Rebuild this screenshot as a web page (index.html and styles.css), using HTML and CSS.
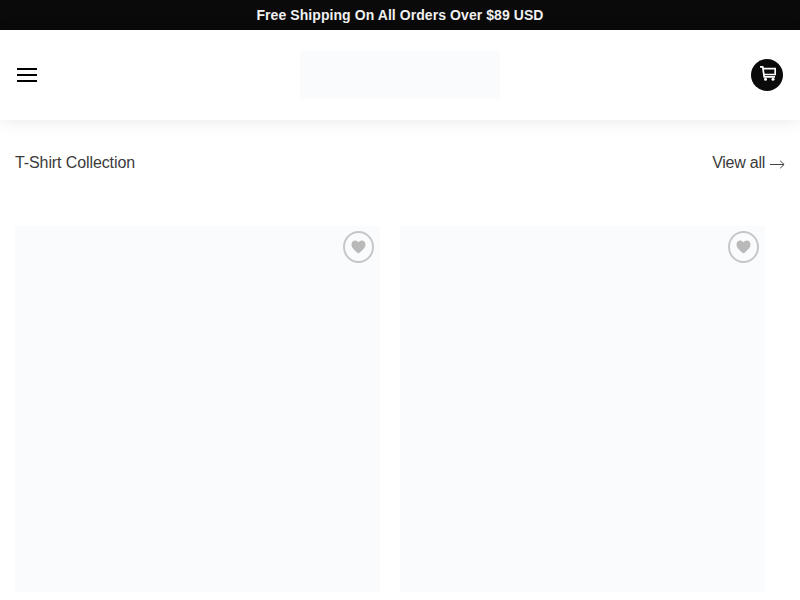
FILE: index.html
```html
<!DOCTYPE html>
<html lang="en">
<head>
    <meta charset="UTF-8">
    <meta name="viewport" content="width=device-width, initial-scale=1.0">
    <title>T-Shirt Collection</title>
    <link rel="stylesheet" href="styles.css">
</head>
<body>
    <div class="promo-bar">Free Shipping On All Orders Over $89 USD</div>

    <header class="site-header">
        <button class="menu-button" aria-label="Menu">
            <span></span>
            <span></span>
            <span></span>
        </button>
        <div class="logo"></div>
        <a class="cart-button" href="#" aria-label="Cart">
            <svg width="16" height="15" viewBox="0 0 16 15">
                <path d="M0 .9h2.700l1.500 9.900h10.800" fill="none" stroke="#fff" stroke-width="1.700"/>
                <path d="M3 2.700h12.200v5.800H3.900" fill="none" stroke="#fff" stroke-width="1.700"/>
                <circle cx="5.500" cy="13.300" r="1.500" fill="#fff"/>
                <circle cx="13" cy="13.300" r="1.500" fill="#fff"/>
            </svg>
        </a>
    </header>

    <main class="collection">
        <div class="collection-head">
            <h2>T-Shirt Collection</h2>
            <a class="view-all" href="#">View all
                <svg width="15" height="9" viewBox="0 0 15 9">
                    <path d="M0 4.500h14M10.200 .8l3.900 3.700-3.900 3.700" fill="none" stroke="#444" stroke-width="1"/>
                </svg>
            </a>
        </div>

        <div class="product-row">
            <div class="product-card">
                <button class="wishlist" aria-label="Add to wishlist">
                    <svg width="15" height="14" viewBox="0 0 16 15">
                        <path d="M8 14.500C3 10.500 .5 8 .5 4.800 .5 2.300 2.400 .6 4.500 .6c1.500 0 2.800.8 3.500 2.100C8.700 1.400 10 .6 11.500 .6c2.100 0 4 1.700 4 4.200 0 3.200-2.500 5.700-7.500 9.700z" fill="#b9b9b9"/>
                    </svg>
                </button>
            </div>
            <div class="product-card">
                <button class="wishlist" aria-label="Add to wishlist">
                    <svg width="15" height="14" viewBox="0 0 16 15">
                        <path d="M8 14.500C3 10.500 .5 8 .5 4.800 .5 2.300 2.400 .6 4.500 .6c1.500 0 2.800.8 3.500 2.100C8.700 1.400 10 .6 11.500 .6c2.100 0 4 1.700 4 4.200 0 3.200-2.500 5.700-7.500 9.700z" fill="#b9b9b9"/>
                    </svg>
                </button>
            </div>
        </div>
    </main>
</body>
</html>
```
FILE: styles.css
```css
html, body {
    height: 600px;
    overflow: hidden;
}

body {
    background-color: white;
    color: #3a3a3a;
    font-family: 'Liberation Sans', Arial, sans-serif;
    margin: 0;
    padding: 0;
}

.promo-bar {
    background-color: #0a0a0a;
    color: #f0f0f0;
    font-size: 14px;
    font-weight: bold;
    letter-spacing: 0.07px;
    height: 30px;
    line-height: 31px;
    text-align: center;
}

.site-header {
    height: 90px;
    background-color: white;
    box-shadow: 0 2px 16px rgba(0, 0, 0, 0.08);
    display: grid;
    grid-template-columns: 1fr auto 1fr;
    align-items: center;
    padding: 0 17px;
    position: relative;
}

.menu-button {
    width: 20px;
    height: 14px;
    padding: 0;
    border: none;
    background: none;
    display: flex;
    flex-direction: column;
    justify-content: space-between;
}

.menu-button span {
    display: block;
    width: 20px;
    height: 2px;
    background-color: #000;
}

.logo {
    width: 200px;
    height: 48px;
    background-color: #fafbfd;
}

.cart-button {
    width: 32px;
    height: 32px;
    border-radius: 50%;
    background-color: #0a0a0a;
    display: flex;
    align-items: center;
    justify-content: center;
    justify-self: end;
}

.cart-button svg {
    margin: -3px 0 0 2px;
}

.collection {
    padding: 0 15px;
}

.collection-head {
    display: flex;
    justify-content: space-between;
    align-items: center;
    height: 20px;
    padding-top: 33px;
    margin-bottom: 53px;
}

.collection-head h2 {
    font-size: 16px;
    font-weight: normal;
    letter-spacing: -0.1px;
    margin: 0;
}

.view-all {
    color: #3a3a3a;
    font-size: 16px;
    letter-spacing: -0.25px;
    text-decoration: none;
    display: flex;
    align-items: center;
    gap: 5px;
}

.view-all svg {
    margin-top: 3px;
}

.product-row {
    display: flex;
    gap: 20px;
}

.product-card {
    width: 365px;
    height: 366px;
    background-color: #fafbfd;
    position: relative;
}

.wishlist {
    position: absolute;
    top: 5px;
    right: 6px;
    width: 31px;
    height: 32px;
    padding: 0;
    border: 2px solid #c6c6c6;
    border-radius: 50%;
    background: none;
    display: flex;
    align-items: center;
    justify-content: center;
}
```
